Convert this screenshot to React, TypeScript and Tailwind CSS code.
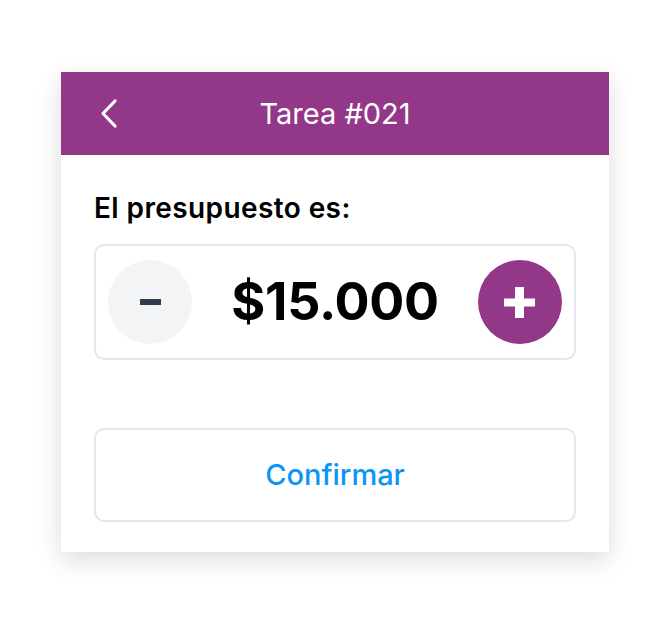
import React, { useState } from "react";

const formatAmount = (n: number) =>
  "$" + n.toString().replace(/\B(?=(\d{3})+(?!\d))/g, ".");

export default function App() {
  const [amount, setAmount] = useState(15000);

  return (
    <div
      className="min-h-screen w-full bg-white flex items-center justify-center pt-[2px]"
      style={{ fontFamily: "Inter, 'Noto Sans', sans-serif" }}
    >
      <div className="w-[548px] bg-white shadow-[0_8px_24px_rgba(0,0,0,0.14)]">
        {/* Header */}
        <div className="relative h-[83px] bg-[#933789] flex items-center justify-center">
          <button className="absolute left-[38px] top-[26px]" aria-label="Volver">
            <svg width="20" height="32" viewBox="0 0 20 32" fill="none">
              <polyline
                points="16,3 4,15.5 16,28"
                stroke="white"
                strokeWidth="3.2"
                strokeLinecap="round"
                strokeLinejoin="round"
              />
            </svg>
          </button>
          <span className="text-white text-[29px] leading-none">Tarea #021</span>
        </div>

        {/* Body */}
        <div className="px-[33px] pt-[37px] pb-[30px]">
          <p className="text-[28px] font-semibold text-black leading-[32px] tracking-[0.4px]">
            El presupuesto es:
          </p>

          <div className="mt-[20px] h-[116px] border-2 border-[#e2e6ee] rounded-[10px] flex items-center justify-between px-[12px]">
            <button
              onClick={() => setAmount((a) => Math.max(0, a - 1000))}
              className="w-[84px] h-[84px] rounded-full bg-[#f3f4f6] flex items-center justify-center"
              aria-label="Restar"
            >
              <div className="w-[21px] h-[6px] bg-[#2f3a4b]" />
            </button>
            <span className="text-[52px] font-bold text-black tracking-[-0.3px] leading-none">
              {formatAmount(amount)}
            </span>
            <button
              onClick={() => setAmount((a) => a + 1000)}
              className="w-[84px] h-[84px] rounded-full bg-[#933789] flex items-center justify-center"
              aria-label="Sumar"
            >
              <svg width="31" height="31" viewBox="0 0 31 31">
                <rect x="11" y="0" width="9" height="31" fill="white" />
                <rect x="0" y="11.5" width="31" height="8" fill="white" />
              </svg>
            </button>
          </div>

          <button className="mt-[68px] w-full h-[94px] border-2 border-[#e2e6ee] rounded-[10px] flex items-center justify-center">
            <span className="text-[29px] font-medium text-[#0d94f7]">Confirmar</span>
          </button>
        </div>
      </div>
    </div>
  );
}
